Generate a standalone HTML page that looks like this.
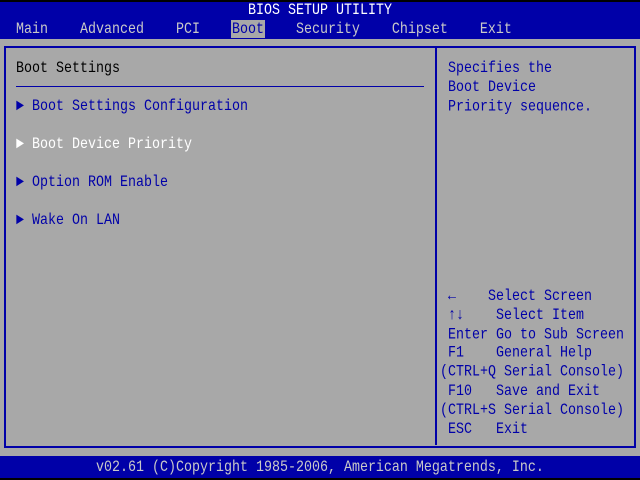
<!DOCTYPE html>
<html><head><style>
body{margin:0;width:640px;height:480px;background:#000;position:relative;overflow:hidden;font-family:"Liberation Mono","DejaVu Sans Mono",monospace;font-size:13.33px;}
div{position:absolute;white-space:pre;}
.t{line-height:15px;transform:scaleY(1.2);transform-origin:0 0;}
.m{line-height:15.83px;transform:scaleY(1.2);transform-origin:0 0;}
.b{color:#0000a8}
.w{color:#fff}
.g{color:#c8c8c8}
</style></head><body>
<div style="left:0;top:2px;width:640px;height:37px;background:#0000a8"></div>
<div style="left:0;top:39px;width:640px;height:417px;background:#a8a8a8"></div>
<div style="left:0;top:456px;width:640px;height:22px;background:#0000a8"></div>
<div style="left:4px;top:46px;width:628px;height:398px;border:2px solid #0000a8"></div>
<div style="left:435px;top:47px;width:2px;height:398px;background:#0000a8"></div>
<div style="left:16px;top:86px;width:408px;height:1px;background:#0000a8"></div>
<div style="left:231px;top:20px;width:34px;height:18px;background:#a8a8a8"></div>
<div class="w t" style="left:248px;top:2px">BIOS SETUP UTILITY</div>
<div class="g t" style="left:16px;top:21px">Main    Advanced    PCI    <span class="b">Boot</span>    Security    Chipset    Exit</div>
<div class="t" style="left:16px;top:60px;color:#000">Boot Settings</div>
<div class="b t" style="left:16px;top:98px">► Boot Settings Configuration</div>
<div class="w t" style="left:16px;top:136px">► Boot Device Priority</div>
<div class="b t" style="left:16px;top:174px">► Option ROM Enable</div>
<div class="b t" style="left:16px;top:212px">► Wake On LAN</div>
<div class="b m" style="left:448px;top:60px">Specifies the
Boot Device
Priority sequence.</div>
<div class="b m" style="left:440px;top:288px"> ←    Select Screen
 ↑↓    Select Item
 Enter Go to Sub Screen
 F1    General Help
(CTRL+Q Serial Console)
 F10   Save and Exit
(CTRL+S Serial Console)
 ESC   Exit</div>
<div class="g t" style="left:96px;top:459px">v02.61 (C)Copyright 1985-2006, American Megatrends, Inc.</div>
</body></html>
